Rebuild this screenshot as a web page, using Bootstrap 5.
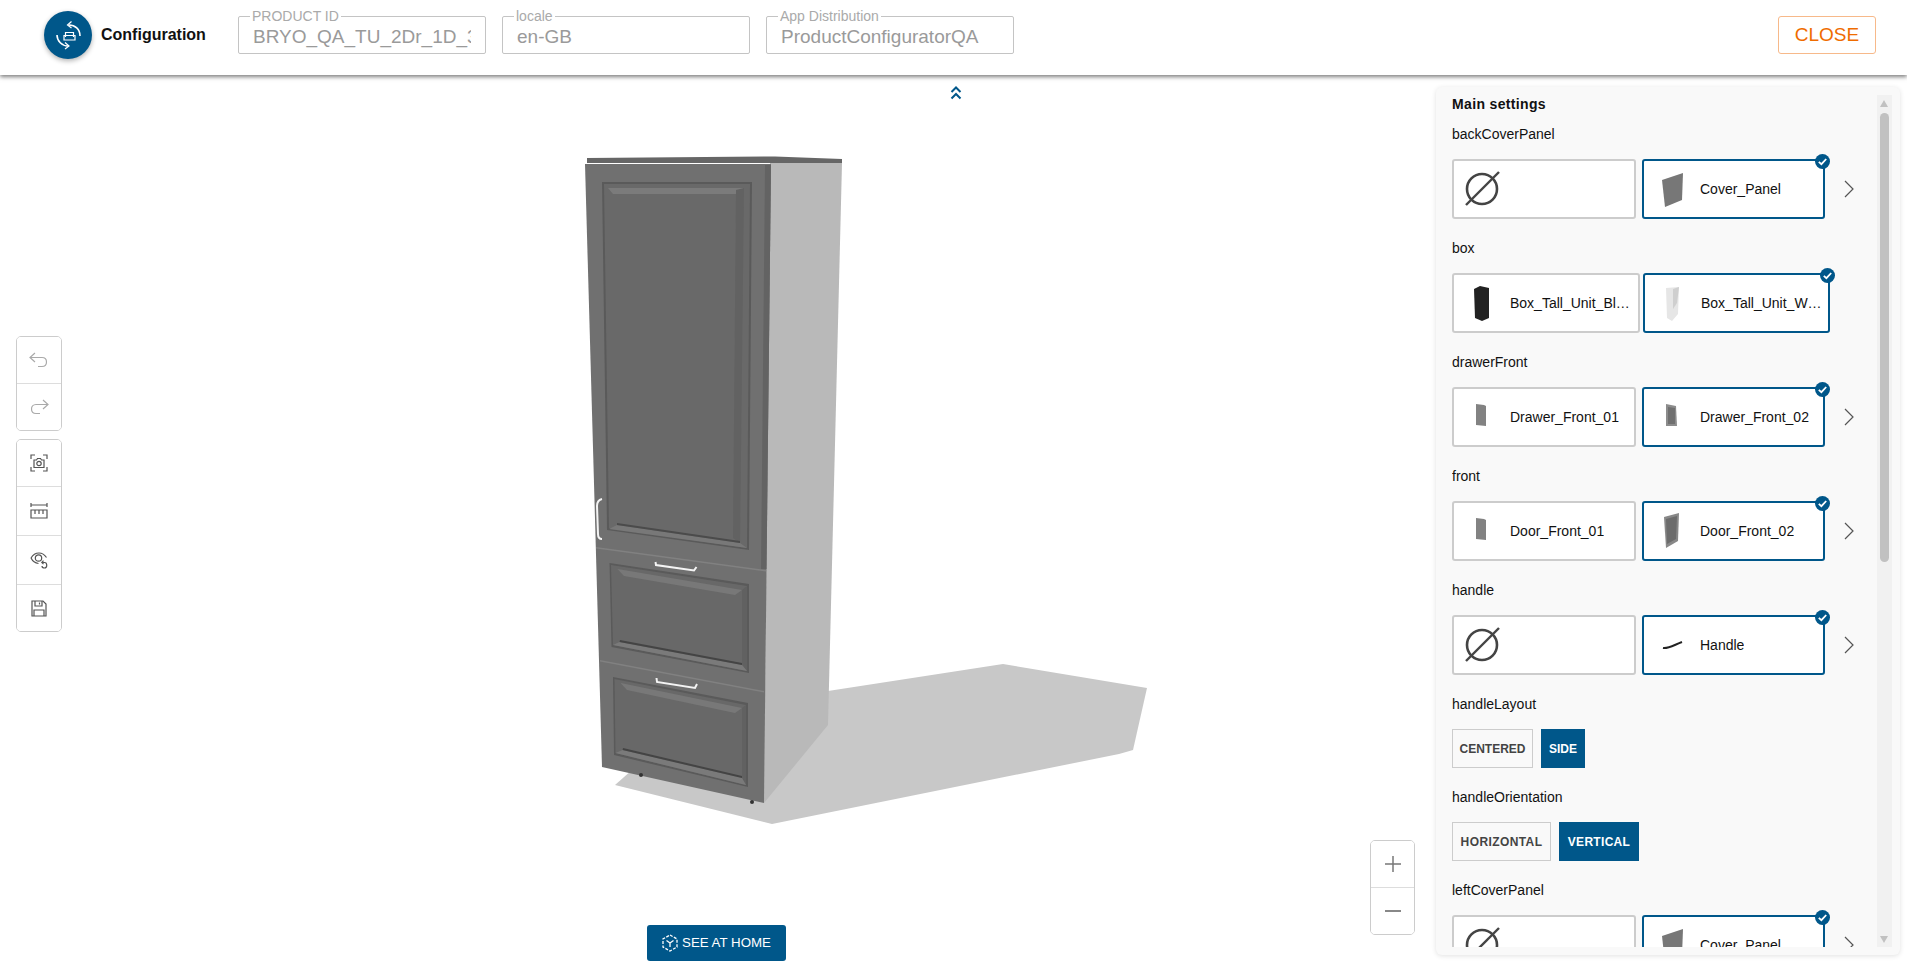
<!DOCTYPE html>
<html lang="en">
<head>
  <meta charset="UTF-8">
  <meta name="viewport" content="width=device-width, initial-scale=1.0">
  <title>Configuration</title>
  <link href="https://cdn.jsdelivr.net/npm/bootstrap@5.3.0/dist/css/bootstrap.min.css" rel="stylesheet">
  <style>
    html, body { height: 100%; }
    body { font-family: "Liberation Sans", Arial, sans-serif; background: #fff; color: #111; overflow: hidden; }
    .page-wrap { height: 970px; }

    /* top bar */
    .top-bar { height: 75px; background: #fff; box-shadow: 0 2px 4px rgba(0,0,0,.5); z-index: 5; padding: 0 31px 5px 44px; }
    .logo-disc { width: 48px; height: 48px; border-radius: 50%; background: #00578a; box-shadow: 0 2px 5px rgba(0,0,0,.3); }
    .logo-title { font-size: 16px; font-weight: 700; margin-left: 9px; width: 137px; }
    .meta-field { position: relative; width: 248px; height: 38px; margin-right: 16px; }
    .meta-field input { width: 100%; height: 100%; border: 1px solid #c4c4c4; border-radius: 2px; padding: 3px 14px 0; font-size: 19px; color: #9a9a9a; background: #fff; outline: 0; }
    .meta-field label { position: absolute; left: 12px; top: -7px; font-size: 14px; line-height: 15px; padding: 0 2px; background: #fff; color: #aaa; }
    .close-btn { width: 98px; height: 38px; border: 1px solid #f7b98a; border-radius: 3px; background: #fff; color: #ef6c00; font-size: 19px; padding: 0; }

    /* 3d viewer */
    .viewer { position: relative; }
    .scene { position: absolute; left: 0; top: 0; width: 1436px; height: 895px; }
    .collapse-arrows { position: absolute; left: 949px; top: 10px; width: 14px; height: 15px; }
    .tool-stack { position: absolute; left: 16px; top: 261px; width: 46px; }
    .tool-group { background: #fff; border: 1px solid #ccc; border-radius: 5px; overflow: hidden; }
    .tool-group button { display: flex; align-items: center; justify-content: center; width: 100%; height: 49px; padding: 0; border: 0; background: #fff; border-top: 1px solid #ddd; }
    .tool-group button:first-child { border-top: 0; height: 46px; }
    .tool-group button:last-child { height: 47px; }
    .zoom-stack { position: absolute; right: 21px; bottom: 35px; width: 45px; }
    .home-btn { position: absolute; left: 647px; bottom: 9px; width: 139px; height: 36px; border: 0; border-radius: 3px; background: #00578a; color: #fff; font-size: 13.3px; padding: 0; }

    /* settings panel */
    .settings-panel { width: 464px; margin: 12px 7px 15px 0; padding: 8px 8px 8px 16px; background: #f9f9f9; border-radius: 6px; box-shadow: 0 1px 5px rgba(0,0,0,.12); flex: none; min-height: 0; }
    .settings-scroll { overflow: hidden; width: 425px; }
    .panel-title { font-size: 14px; font-weight: 700; line-height: 18px; margin-bottom: 12px; letter-spacing: .35px; }
    .group-label { font-size: 14px; line-height: 18px; margin-bottom: 16px; }
    .opt-row { height: 60px; margin-bottom: 20px; gap: 6px; }
    .opt-card { position: relative; width: 184px; height: 60px; flex: none; display: flex; align-items: center; padding-right: 12px; background: #fff; border: 2px solid #ccc; border-radius: 3px; font-size: 14px; }
    .opt-card.is-on { border-color: #00578a; width: 183px; }
    .opt-card.wide-a { width: 188px; padding-right: 5px; }
    .opt-card.wide-b { width: 187px; padding-right: 5px; }
    .wide-row { gap: 3px; }
    .opt-thumb { width: 56px; height: 56px; flex: none; }
    .opt-name { white-space: nowrap; overflow: hidden; text-overflow: ellipsis; }
    .opt-check { position: absolute; right: -6.5px; top: -7.5px; width: 15px; height: 15px; }
    .next-arrow { width: 12px; height: 18px; margin-left: 12px; flex: none; }
    .switch-row { gap: 8px; margin-bottom: 20px; }
    .switch-btn { height: 39px; border: 1px solid #ccc; background: transparent; color: #444; font-size: 12px; font-weight: 700; padding: 0; border-radius: 0; }
    .switch-btn.is-on { background: #00578a; border-color: #00578a; color: #fff; }
    .sw-centered { width: 81px; }
    .sw-side { width: 44px; }
    .sw-horizontal { width: 99px; letter-spacing: .4px; }
    .sw-vertical { width: 80px; letter-spacing: .3px; }
    .fake-scroll { width: 15px; background: #f1f1f1; position: relative; flex: none; }
    .scroll-thumb { position: absolute; left: 3px; top: 18px; width: 9px; height: 449px; background: #c1c1c1; border-radius: 5px; }
    .scroll-up, .scroll-down { position: absolute; left: 3px; width: 0; height: 0; border-left: 4.5px solid transparent; border-right: 4.5px solid transparent; }
    .scroll-up { top: 5px; border-bottom: 7px solid #c1c1c1; }
    .scroll-down { bottom: 4px; border-top: 7px solid #c1c1c1; }
  </style>
</head>

<body>
  <svg width="0" height="0" class="position-absolute">
    <symbol id="none-ico" viewBox="2 2 56 56"><circle cx="30" cy="30" r="15" fill="none" stroke="#444" stroke-width="2.6"/><path d="M14 46 47 13" stroke="#444" stroke-width="2.4"/></symbol>
    <symbol id="panel-ico" viewBox="2 2 56 56"><path d="M20 21 41 14 40 41 23 48Z" fill="#777"/></symbol>
    <symbol id="boxb-ico" viewBox="2 2 56 56"><path d="M22 16 28 13 37 15 37 45 30 48 23 45Z" fill="#222"/></symbol>
    <symbol id="boxw-ico" viewBox="2 2 56 56"><path d="M23 15 36 14 35 41 29 48 24 45Z" fill="#e6e6e6"/><path d="M30 16 36 14 34 30 30 36Z" fill="#cfcfcf"/></symbol>
    <symbol id="front-ico" viewBox="2 2 56 56"><path d="M24 17 32 18 34 19 34 39 24 38Z" fill="#828282"/></symbol>
    <symbol id="front2-ico" viewBox="2 2 56 56"><path d="M24 17 34 19 35 39 24 39Z" fill="#8c8c8c"/><path d="M26 20 33 21 33 37 26 37Z" fill="#707070"/></symbol>
    <symbol id="door2-ico" viewBox="2 2 56 56"><path d="M22 16 37 12 36 40 24 47Z" fill="#888"/><path d="M24 18 35 15 34 38 25 43Z" fill="#6c6c6c"/></symbol>
    <symbol id="handle-ico" viewBox="2 2 56 56"><path d="M21 33C26 34 32 30 40 27" fill="none" stroke="#222" stroke-width="2"/></symbol>
    <symbol id="check-ico" viewBox="0 0 15 15"><circle cx="7.5" cy="7.5" r="7.5" fill="#00578a"/><path d="M3.8 7.8 6.4 10.2 11.2 5" fill="none" stroke="#fff" stroke-width="1.8"/></symbol>
    <symbol id="next-ico" viewBox="0 0 12 18"><path d="M2 1 10 9 2 17" fill="none" stroke="#555" stroke-width="1.2"/></symbol>
  </svg>

  <div class="page-wrap d-flex flex-column">
    <!-- Top bar -->
    <header class="top-bar d-flex align-items-center flex-shrink-0">
      <div class="logo-disc d-flex align-items-center justify-content-center flex-shrink-0">
        <svg width="48" height="48" viewBox="0 0 48 48" fill="none" stroke="#fff">
          <path d="M25 14C31 14 36 18 36 25" stroke-width="1.6"/><path d="M27.5 10.5 23.5 14 27.5 17" stroke-width="1.2"/>
          <path d="M13 24C13 30 18 35 24 35" stroke-width="1.6"/><path d="M21 31.5 25 35 21 38" stroke-width="1.2"/>
          <path d="M21.5 26V21.5H29.5V26" stroke-width="1.2"/><path d="M20 24.5H31V29H20Z" stroke-width="1.2"/>
        </svg>
      </div>
      <div class="logo-title">Configuration</div>
      <div class="meta-field"><label>PRODUCT ID</label><input type="text" readonly value="BRYO_QA_TU_2Dr_1D_3Dr_600"></div>
      <div class="meta-field"><label>locale</label><input type="text" readonly value="en-GB"></div>
      <div class="meta-field"><label>App Distribution</label><input type="text" readonly value="ProductConfiguratorQA"></div>
      <button class="btn close-btn ms-auto">CLOSE</button>
    </header>

    <main class="d-flex flex-grow-1" style="min-height:0">
      <!-- Viewer -->
      <section class="viewer flex-grow-1">
        <svg class="scene" viewBox="0 75 1436 895">
          <path d="M828 691 1003 664 1147 688 1133 750 1119 754 772 824 615 785 632 770Z" fill="#c8c8c8"/>
          <path d="M770 163 842 163 828 725 764 803Z" fill="#b9b9b9"/>
          <path d="M587 158 775 156.5 842 159 842 163 587 163Z" fill="#666"/>
          <path d="M585 164 771 164 764 803 602 767Z" fill="#707070"/>
          <circle cx="641" cy="775" r="2" fill="#333"/><circle cx="752" cy="802" r="2" fill="#333"/>

          <!-- door -->
          <path d="M765 165H771L766.5 569H761Z" fill="#636363"/>
          <path d="M602 182 752 182 749 550 607 530Z" fill="#5a5a5a"/>
          <path d="M604 184 750 184 747 548 609 528Z" fill="#696969"/>
          <path d="M608 188 744 188 739 194 613 194Z" fill="#7b7b7b"/>
          <path d="M736 190 744 188 740 543 733 538Z" fill="#626262"/>
          <path d="M609 529 617 525 740 543 747 548Z" fill="#787878"/>
          <path d="M617 525 740 543 740 541 617 523Z" fill="#4b4b4b"/>

          <!-- upper drawer -->
          <path d="M596 547 766 570 766 571.5 596 548.5Z" fill="#818181"/>
          <path d="M609.5 563 749 584 749 673 611.5 647Z" fill="#5a5a5a"/>
          <path d="M611 565 747 586 747 671 613 645Z" fill="#686868"/>
          <path d="M617.5 569 742 590 735 595 624 576Z" fill="#787878"/>
          <path d="M742 590 747 586 747 671 742 665Z" fill="#616161"/>
          <path d="M613 645 619.5 642 742 665 747 671Z" fill="#7a7a7a"/>
          <path d="M619.5 642 742 665 742 663 620 640Z" fill="#444"/>

          <!-- lower drawer -->
          <path d="M600 660 764 691 764 692.5 600 661.5Z" fill="#818181"/>
          <path d="M613 677 748 703 748 787 614 755Z" fill="#5a5a5a"/>
          <path d="M614.5 679 746 705 746 785 615.5 753Z" fill="#686868"/>
          <path d="M620.6 683 742 708 735 713 627 690Z" fill="#787878"/>
          <path d="M742 708 746 705 746 785 742 778Z" fill="#616161"/>
          <path d="M615.5 753 622.6 750 742 778 746 785Z" fill="#7a7a7a"/>
          <path d="M622.6 750 742 778 742 776 623 748Z" fill="#444"/>

          <!-- handles -->
          <g fill="none" stroke="#f4f4f4" stroke-width="2">
            <path d="M602 499C598 500 597 502 597 506L598 534C598 537 599 539 602 539"/>
            <path d="M655.5 562 656 565 694 570.5 696.5 567"/>
            <path d="M656.5 678 657 682 695 688 697 684"/>
          </g>
        </svg>

        <svg class="collapse-arrows" viewBox="0 0 14 15" fill="none" stroke="#00578a" stroke-width="2">
          <path d="M2.5 7 7 2.5 11.5 7"/><path d="M2.5 13.5 7 9 11.5 13.5"/>
        </svg>

        <div class="tool-stack d-flex flex-column gap-2">
          <div class="tool-group">
            <button><svg width="20" height="16" viewBox="0 0 20 16" fill="none" stroke="#aaa" stroke-width="1.2"><path d="M6 1 1 5.5 6 10"/><path d="M1 5.5H13C19 5.5 19 14.5 13 14.5H9"/></svg></button>
            <button><svg width="20" height="16" viewBox="0 0 20 16" fill="none" stroke="#aaa" stroke-width="1.2"><path d="M14 1 19 5.5 14 10"/><path d="M19 5.5H7C1 5.5 1 14.5 7 14.5H11"/></svg></button>
          </div>
          <div class="tool-group">
            <button><svg width="18" height="18" viewBox="0 0 18 18" fill="none" stroke="#555" stroke-width="1.2"><path d="M1 5V1H5M13 1H17V5M17 13V17H13M5 17H1V13"/><path d="M4 6H6.5L7.5 4.5H10.5L11.5 6H14V13.5H4Z"/><circle cx="9" cy="9.5" r="2.2"/></svg></button>
            <button><svg width="18" height="18" viewBox="0 0 18 18" fill="none" stroke="#555" stroke-width="1.2"><path d="M1 1V5M17 1V5M1 3H17"/><path d="M1 8H17V16H1Z"/><path d="M5 8V12M9 8V12M13 8V12"/></svg></button>
            <button><svg width="18" height="18" viewBox="0 0 18 18" fill="none" stroke="#555" stroke-width="1.2"><path d="M1 7C3 3.5 6 2 9 2C12 2 14.5 3.5 16.5 6.5"/><path d="M1 7C2.5 10 5 12 8.5 12.5"/><circle cx="8.5" cy="7" r="3.2"/><path d="M12 11.5H14.5C17.5 11.5 17.5 17 14.5 17C13 17 12 16 12 15"/><path d="M13.5 9.7 11.8 11.5 13.5 13.2"/></svg></button>
            <button><svg width="16" height="17" viewBox="0 0 16 17" fill="none" stroke="#555" stroke-width="1.2"><path d="M1 1H12L15 4V16H1Z"/><path d="M4 1V6H11V1M8.5 2.5V4.5"/><path d="M3 16V10H13V16"/></svg></button>
          </div>
        </div>

        <div class="zoom-stack tool-group">
          <button><svg width="18" height="18" viewBox="0 0 18 18" stroke="#777" stroke-width="1.5"><path d="M1 9H17M9 1V17"/></svg></button>
          <button><svg width="18" height="18" viewBox="0 0 18 18" stroke="#888" stroke-width="1.8"><path d="M1 9H17"/></svg></button>
        </div>

        <button class="home-btn d-flex align-items-center justify-content-center gap-1">
          <svg width="16" height="18" viewBox="0 0 16 18" fill="none" stroke="#fff" stroke-width="1.3" stroke-dasharray="3 1.4"><path d="M8 1 15 5V13L8 17 1 13V5Z"/><path d="M4.5 6.5 8 9 11.5 6.5M8 9V13" stroke-dasharray="none"/></svg>
          SEE AT HOME
        </button>
      </section>

      <!-- Settings panel -->
      <aside class="settings-panel d-flex">
        <div class="settings-scroll flex-grow-1">
          <div class="panel-title">Main settings</div>

          <div class="group-label">backCoverPanel</div>
          <div class="opt-row d-flex align-items-center">
            <div class="opt-card"><svg class="opt-thumb"><use href="#none-ico"/></svg></div>
            <div class="opt-card is-on"><svg class="opt-thumb"><use href="#panel-ico"/></svg><span class="opt-name">Cover_Panel</span><svg class="opt-check"><use href="#check-ico"/></svg></div>
            <svg class="next-arrow"><use href="#next-ico"/></svg>
          </div>

          <div class="group-label">box</div>
          <div class="opt-row wide-row d-flex align-items-center">
            <div class="opt-card wide-a"><svg class="opt-thumb"><use href="#boxb-ico"/></svg><span class="opt-name">Box_Tall_Unit_Black</span></div>
            <div class="opt-card is-on wide-b"><svg class="opt-thumb"><use href="#boxw-ico"/></svg><span class="opt-name">Box_Tall_Unit_White</span><svg class="opt-check"><use href="#check-ico"/></svg></div>
          </div>

          <div class="group-label">drawerFront</div>
          <div class="opt-row d-flex align-items-center">
            <div class="opt-card"><svg class="opt-thumb"><use href="#front-ico"/></svg><span class="opt-name">Drawer_Front_01</span></div>
            <div class="opt-card is-on"><svg class="opt-thumb"><use href="#front2-ico"/></svg><span class="opt-name">Drawer_Front_02</span><svg class="opt-check"><use href="#check-ico"/></svg></div>
            <svg class="next-arrow"><use href="#next-ico"/></svg>
          </div>

          <div class="group-label">front</div>
          <div class="opt-row d-flex align-items-center">
            <div class="opt-card"><svg class="opt-thumb"><use href="#front-ico"/></svg><span class="opt-name">Door_Front_01</span></div>
            <div class="opt-card is-on"><svg class="opt-thumb"><use href="#door2-ico"/></svg><span class="opt-name">Door_Front_02</span><svg class="opt-check"><use href="#check-ico"/></svg></div>
            <svg class="next-arrow"><use href="#next-ico"/></svg>
          </div>

          <div class="group-label">handle</div>
          <div class="opt-row d-flex align-items-center">
            <div class="opt-card"><svg class="opt-thumb"><use href="#none-ico"/></svg></div>
            <div class="opt-card is-on"><svg class="opt-thumb"><use href="#handle-ico"/></svg><span class="opt-name">Handle</span><svg class="opt-check"><use href="#check-ico"/></svg></div>
            <svg class="next-arrow"><use href="#next-ico"/></svg>
          </div>

          <div class="group-label">handleLayout</div>
          <div class="switch-row d-flex">
            <button class="switch-btn sw-centered">CENTERED</button>
            <button class="switch-btn sw-side is-on">SIDE</button>
          </div>

          <div class="group-label">handleOrientation</div>
          <div class="switch-row d-flex">
            <button class="switch-btn sw-horizontal">HORIZONTAL</button>
            <button class="switch-btn sw-vertical is-on">VERTICAL</button>
          </div>

          <div class="group-label">leftCoverPanel</div>
          <div class="opt-row d-flex align-items-center">
            <div class="opt-card"><svg class="opt-thumb"><use href="#none-ico"/></svg></div>
            <div class="opt-card is-on"><svg class="opt-thumb"><use href="#panel-ico"/></svg><span class="opt-name">Cover_Panel</span><svg class="opt-check"><use href="#check-ico"/></svg></div>
            <svg class="next-arrow"><use href="#next-ico"/></svg>
          </div>
        </div>
        <div class="fake-scroll">
          <span class="scroll-up"></span>
          <span class="scroll-thumb"></span>
          <span class="scroll-down"></span>
        </div>
      </aside>
    </main>
  </div>

  <script src="https://cdn.jsdelivr.net/npm/bootstrap@5.3.0/dist/js/bootstrap.bundle.min.js"></script>
</body>
</html>
